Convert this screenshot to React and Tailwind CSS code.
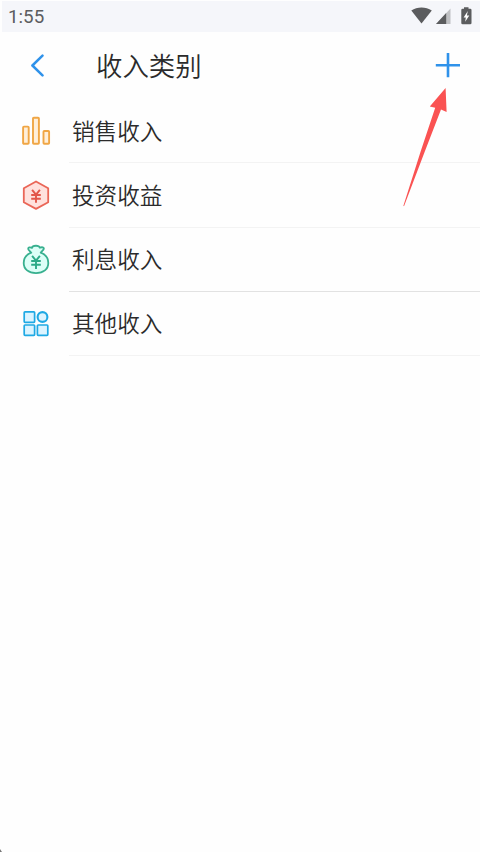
function BarsIcon() {
  return (
    <svg className="size-8" viewBox="0 0 32 32" fill="#ffefda" stroke="#f0a645" strokeWidth="1.9">
      <rect x="3.1" y="11.6" width="5.6" height="17.2" rx="0.8" />
      <rect x="13" y="2.8" width="5.9" height="26" rx="0.8" />
      <rect x="23.5" y="16" width="5.6" height="12.8" rx="0.8" />
    </svg>
  );
}

function HexagonIcon() {
  return (
    <svg className="size-8" viewBox="0 0 32 32" strokeLinejoin="round">
      <path d="M16 1.5 28.2 8.2V22.2L16 28.9 3.8 22.2V8.2Z" fill="#ffe1dd" stroke="#ea6657" strokeWidth="1.8" />
      <path d="M12.1 9.8 16 14.6 19.9 9.8M11.2 15H20.8M11.2 18.7H20.8M16 14.6V22.8" fill="none" stroke="#e2574a" strokeWidth="1.9" />
    </svg>
  );
}

function BagIcon() {
  return (
    <svg className="size-8" viewBox="0 0 32 32" strokeLinejoin="round">
      <path
        d="M11.3 8.7C10 7 8.4 6.1 8.2 4.8 8.1 3.4 9.8 2.9 12 3.8 12.6 1.2 18.9 1 19.9 3.7 22.2 2.8 24.1 3.4 23.8 4.8 23.5 6.1 22 6.9 20.7 8.7 25.5 10.5 28.3 14.6 28.3 19 28.3 25.3 23.4 29.1 16 29.1S3.7 25.3 3.7 19C3.7 14.6 6.6 10.5 11.3 8.7Z"
        fill="#dcfff7"
        stroke="#38b08f"
        strokeWidth="1.8"
      />
      <path d="M12.1 11.8 16 16.6 19.9 11.8M11.2 17H20.8M11.2 20.7H20.8M16 16.6V25" fill="none" stroke="#2dab88" strokeWidth="1.9" />
    </svg>
  );
}

function TilesIcon() {
  return (
    <svg className="size-8" viewBox="0 0 32 32" fill="#dcf4ff" stroke="#1fa9e4" strokeWidth="1.7">
      <rect x="4.2" y="3.8" width="10.4" height="10.6" rx="0.8" />
      <circle cx="22.5" cy="9" r="4.9" strokeWidth="2.1" />
      <rect x="4.2" y="17" width="10.4" height="10.4" rx="0.8" />
      <rect x="17.4" y="17" width="10.4" height="10.4" rx="0.8" />
    </svg>
  );
}

const categories = [
  { name: "销售收入", Icon: BarsIcon, height: "h-[65px]", line: "border-[#f3f3f3] pt-0.5" },
  { name: "投资收益", Icon: HexagonIcon, height: "h-[65px]", line: "border-[#f3f3f3]" },
  { name: "利息收入", Icon: BagIcon, height: "h-16", line: "border-[#e2e2e2] pb-px" },
  { name: "其他收入", Icon: TilesIcon, height: "h-16", line: "border-[#f3f3f3] pb-px" },
];

function StatusBar() {
  return (
    <div className="flex h-8 pt-px pl-0.5">
      <div className="flex h-[31px] flex-1 items-center justify-between bg-[#f5f6fa] pl-1.5 text-[#5c5d60]">
        <span className="pt-0.5 font-[Roboto,sans-serif] text-[18.8px] leading-none font-normal">1:55</span>
        <svg className="h-[31px] w-[72px]" viewBox="408 1 72 31" fill="#5b5c5e">
          <path d="M411.3 10.6C417.2 6.4 425.8 6.4 431.8 10.6L421.5 23.6Z" />
          <path d="M436 24 450.5 8.5V24Z" fill="#bfc0c3" />
          <path d="M436 24 446.2 13V24Z" />
          <path d="M464 7.2h4.5v1.6h1.7q1.3 0 1.3 1.3V23q0 1.3-1.3 1.3h-7.6q-1.3 0-1.3-1.3V10.1q0-1.3 1.3-1.3H464Z" />
          <path d="M467.8 11 463.6 17.5h2.2L465.2 21.8 469.3 15.5h-2.4Z" fill="#fff" />
        </svg>
      </div>
    </div>
  );
}

export default function App() {
  return (
    <main className="relative flex h-[852px] w-[480px] flex-col overflow-hidden bg-[#fefefe] font-['Noto_Sans_CJK_SC',sans-serif] font-[350] text-[#2b2b2b]">
      <StatusBar />
      <header className="flex h-[66px] items-center pr-[19px] pl-[30px]">
        <svg className="h-6 w-4" viewBox="0 0 16 24" fill="none" stroke="#2f92ea" strokeWidth="2.5" strokeLinecap="round" strokeLinejoin="round">
          <path d="M12.5 2.6 2.4 12.5 12.5 22.4" />
        </svg>
        <h1 className="ml-[50px] flex-1 text-[26.4px] leading-8 font-[350]">收入类别</h1>
        <svg className="size-[26px]" viewBox="0 0 26 26" fill="none" stroke="#2f92ea" strokeWidth="2.6">
          <path d="M13 1V25.2M.8 13.3H25" />
        </svg>
      </header>
      <ul>
        {categories.map(({ name, Icon, height, line }) => (
          <li key={name} className={`flex pl-5 ${height}`}>
            <div className="flex w-[49px] items-center">
              <Icon />
            </div>
            <div className={`flex flex-1 items-center border-b pl-[3px] text-[22.6px] leading-8 ${line}`}>{name}</div>
          </li>
        ))}
      </ul>
      <svg className="absolute top-[86px] left-[400px] h-[124px] w-[50px]" viewBox="400 86 50 124" fill="#fa5252">
        <path d="M445.6 88 446.6 112 441 109.5 424.8 151.5 404 206.3 403.4 205.8 420.8 151 435.2 107.8 429.8 106.6Z" />
      </svg>
      <svg className="absolute bottom-0 left-0 h-1 w-0.5" viewBox="0 0 2 4" fill="#777">
        <path d="M0 1 2 4H0Z" />
      </svg>
    </main>
  );
}
